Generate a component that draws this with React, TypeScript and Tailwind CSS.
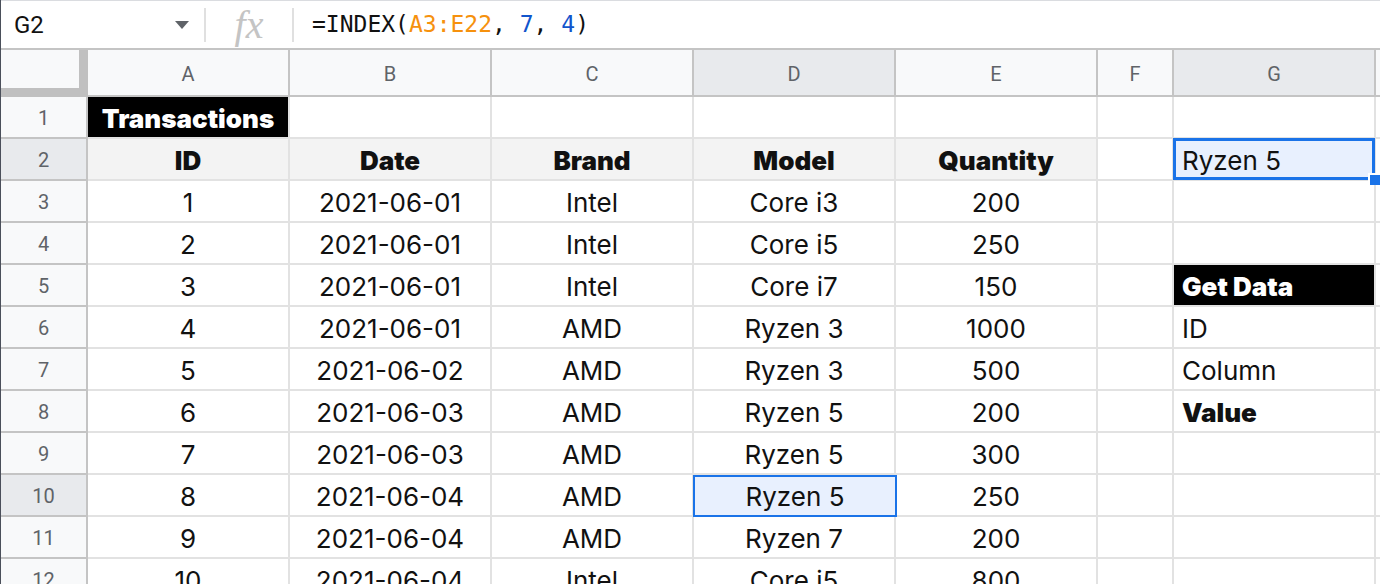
import React from "react";

type Col = { key: string; w: string };

const cols: Col[] = [
  { key: "A", w: "w-[202px]" },
  { key: "B", w: "w-[202px]" },
  { key: "C", w: "w-[202px]" },
  { key: "D", w: "w-[202px]" },
  { key: "E", w: "w-[202px]" },
  { key: "F", w: "w-[76px]" },
  { key: "G", w: "w-[202px]" },
];

const data: string[][] = [
  ["1", "2021-06-01", "Intel", "Core i3", "200"],
  ["2", "2021-06-01", "Intel", "Core i5", "250"],
  ["3", "2021-06-01", "Intel", "Core i7", "150"],
  ["4", "2021-06-01", "AMD", "Ryzen 3", "1000"],
  ["5", "2021-06-02", "AMD", "Ryzen 3", "500"],
  ["6", "2021-06-03", "AMD", "Ryzen 5", "200"],
  ["7", "2021-06-03", "AMD", "Ryzen 5", "300"],
  ["8", "2021-06-04", "AMD", "Ryzen 5", "250"],
  ["9", "2021-06-04", "AMD", "Ryzen 7", "200"],
  ["10", "2021-06-04", "Intel", "Core i5", "800"],
];

const heads = ["ID", "Date", "Brand", "Model", "Quantity"];

// side panel in column G, keyed by row number
const panel: Record<number, { text: string; style: "black" | "plain" | "bold" }> = {
  5: { text: "Get Data", style: "black" },
  6: { text: "ID", style: "plain" },
  7: { text: "Column", style: "plain" },
  8: { text: "Value", style: "bold" },
};

function RowHead({ n, active }: { n: number; active?: boolean }) {
  return (
    <div
      className={`${active ? "bg-[#e8eaed]" : "bg-[#f8f9fa]"} w-[87px] shrink-0 flex items-center justify-center pt-[1px] border-r-2 border-b-2 border-[#c4c4c4] text-[20px] text-[#5f6368] font-['Roboto',sans-serif]`}
    >
      {n}
    </div>
  );
}

function Cell({ w, children, className = "" }: { w: string; children?: React.ReactNode; className?: string }) {
  return (
    <div className={`${w} relative shrink-0 flex items-center pt-[3px] border-r-2 border-b-2 border-[#e2e2e2] text-[26px] text-[#111] ${className}`}>
      {children}
    </div>
  );
}

function GCell({ row }: { row: number }) {
  const p = panel[row];
  if (row === 2) {
    return (
      <Cell w="w-[202px]">
        <div className="absolute -left-[1px] -top-[1px] -right-[1px] -bottom-[1px] border-[3px] border-[#1a73e8] bg-[#e8f0fe] flex items-center pl-[6px] pt-[3px] z-10">
          Ryzen 5
        </div>
        <div className="absolute -right-[6px] -bottom-[6px] w-[12px] h-[12px] bg-[#1a73e8] border-t-2 border-l-2 border-white z-20" />
      </Cell>
    );
  }
  if (!p) return <Cell w="w-[202px]" />;
  if (p.style === "black")
    return (
      <Cell w="w-[202px]" className="bg-black pl-[8px] text-white font-black">
        {p.text}
      </Cell>
    );
  return (
    <Cell w="w-[202px]" className={`pl-[8px] ${p.style === "bold" ? "font-black" : ""}`}>
      {p.text}
    </Cell>
  );
}

export default function App() {
  return (
    <div className="w-[1380px] h-[584px] overflow-hidden bg-white border-l border-[#4a4f5a] font-['Inter',sans-serif]">
      {/* formula bar */}
      <div className="flex h-[50px] items-center border-t border-b-2 border-t-[#dadce0] border-b-[#c4c4c4]">
        <div className="w-[203px] flex items-center justify-between pl-[13px] pr-[15px] text-[24px] text-[#111] font-['Roboto',sans-serif]">
          <span>G2</span>
          <svg width="14" height="8" viewBox="0 0 14 8">
            <path d="M0 0h14L7 8z" fill="#5f6368" />
          </svg>
        </div>
        <div className="w-[2px] h-[34px] bg-[#e0e0e0]" />
        <div className="w-[86px] flex items-center justify-center text-[40px] italic text-[#c4c4c4] font-['Liberation_Serif',serif] leading-none">
          fx
        </div>
        <div className="w-[2px] h-[34px] bg-[#e0e0e0]" />
        <div className="pl-[18px] text-[23px] text-[#111] font-['DejaVu_Sans_Mono',monospace]">
          =INDEX(<span className="text-[#f6910d]">A3:E22</span>, <span className="text-[#1155cc]">7</span>,{" "}
          <span className="text-[#1155cc]">4</span>)
        </div>
      </div>

      {/* column headers */}
      <div className="flex h-[47px]">
        <div className="w-[87px] shrink-0 bg-[#c0c0c0]">
          <div className="w-[78px] h-[38px] bg-[#f8f9fa]" />
        </div>
        {cols.map((c) => (
          <div
            key={c.key}
            className={`${c.w} ${c.key === "D" || c.key === "G" ? "bg-[#e8eaed]" : "bg-[#f8f9fa]"} shrink-0 flex items-center justify-center pt-[2px] border-r-2 border-b-2 border-[#c4c4c4] text-[20px] text-[#5f6368] font-['Roboto',sans-serif]`}
          >
            {c.key}
          </div>
        ))}
        <div className="flex-1 bg-[#f8f9fa] border-b-2 border-[#c4c4c4]" />
      </div>

      {/* row 1 */}
      <div className="flex h-[42px]">
        <RowHead n={1} />
        <Cell w="w-[202px]" className="bg-black justify-center text-white font-black">
          Transactions
        </Cell>
        {cols.slice(1).map((c) => (
          <Cell key={c.key} w={c.w} />
        ))}
        <div className="flex-1 border-b-2 border-[#e2e2e2]" />
      </div>

      {/* row 2 */}
      <div className="flex h-[42px]">
        <RowHead n={2} active />
        {heads.map((h) => (
          <Cell key={h} w="w-[202px]" className="bg-[#f3f3f3] justify-center font-black">
            {h}
          </Cell>
        ))}
        <Cell w="w-[76px]" />
        <GCell row={2} />
        <div className="flex-1 border-b-2 border-[#e2e2e2]" />
      </div>

      {data.map((r, i) => {
        const row = i + 3;
        return (
          <div key={row} className="flex h-[42px]">
            <RowHead n={row} active={row === 10} />
            {r.map((v, j) => (
              <Cell key={j} w="w-[202px]" className="justify-center">
                {row === 10 && j === 3 ? (
                  <div className="absolute -left-[1px] top-0 -right-[3px] -bottom-[2px] border-2 border-[#1a73e8] bg-[#e8f0fe] flex items-center justify-center pt-[1px] z-10">
                    {v}
                  </div>
                ) : (
                  v
                )}
              </Cell>
            ))}
            <Cell w="w-[76px]" />
            <GCell row={row} />
            <div className="flex-1 border-b-2 border-[#e2e2e2]" />
          </div>
        );
      })}
    </div>
  );
}
